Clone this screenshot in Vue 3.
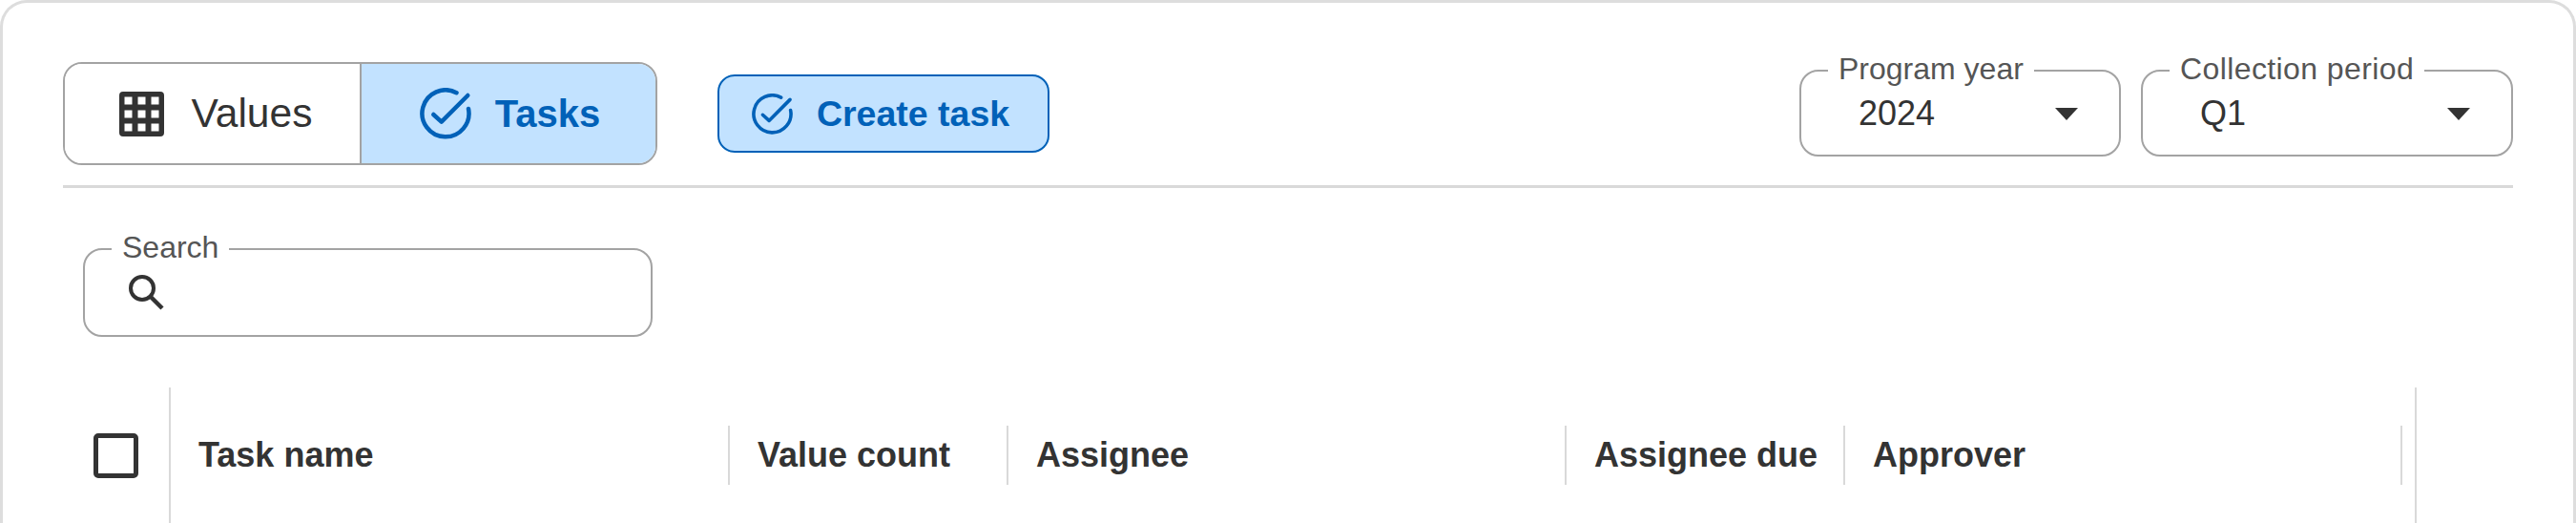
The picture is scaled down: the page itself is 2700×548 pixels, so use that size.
<script setup>
const columns = [
  { label: 'Task name', width: 586 },
  { label: 'Value count', width: 292 },
  { label: 'Assignee', width: 585 },
  { label: 'Assignee due', width: 292 },
  { label: 'Approver', width: 584 }
]
</script>

<template>
  <div class="card">
    <div class="toolbar">
      <div class="toggle">
        <button class="toggle-btn">
          <svg class="grid-icon" viewBox="0 0 47 47">
            <path fill="#333" fill-rule="evenodd" d="M4 0h39a4 4 0 0 1 4 4v39a4 4 0 0 1-4 4H4a4 4 0 0 1-4-4V4a4 4 0 0 1 4-4zM5.500 5.500v8h8v-8zm14 0v8h8v-8zm14 0v8h8v-8zM5.500 19.500v8h8v-8zm14 0v8h8v-8zm14 0v8h8v-8zM5.500 33.500v8h8v-8zm14 0v8h8v-8zm14 0v8h8v-8z" />
          </svg>
          <span>Values</span>
        </button>
        <button class="toggle-btn active">
          <svg class="check-icon" viewBox="0 0 54 54">
            <path fill="none" stroke="#0061b8" stroke-width="4.500" stroke-linecap="round" d="M38.500 5.200A24.500 24.500 0 1 0 51 22" />
            <path fill="none" stroke="#0061b8" stroke-width="4.500" stroke-linecap="round" stroke-linejoin="round" d="M14.300 28l8.400 7.700L50.300 8" />
          </svg>
          <span>Tasks</span>
        </button>
      </div>
      <button class="create-btn">
        <svg class="create-icon" viewBox="0 0 54 54">
          <path fill="none" stroke="#0061b8" stroke-width="4.500" stroke-linecap="round" d="M38.500 5.200A24.500 24.500 0 1 0 51 22" />
          <path fill="none" stroke="#0061b8" stroke-width="4.500" stroke-linecap="round" stroke-linejoin="round" d="M14.300 28l8.400 7.700L50.300 8" />
        </svg>
        <span>Create task</span>
      </button>
      <div class="spacer"></div>
      <div class="field year">
        <label class="field-label">Program year</label>
        <span class="field-value">2024</span>
        <span class="caret"></span>
      </div>
      <div class="field period">
        <label class="field-label">Collection period</label>
        <span class="field-value">Q1</span>
        <span class="caret"></span>
      </div>
    </div>
    <div class="rule"></div>
    <div class="field search">
      <label class="field-label">Search</label>
      <svg class="search-icon" viewBox="0 0 38 38">
        <circle cx="15" cy="15" r="12" fill="none" stroke="#333" stroke-width="4" />
        <path d="M24 24l12 12" stroke="#333" stroke-width="4.500" fill="none" />
      </svg>
    </div>
    <div class="table-head">
      <div class="check-cell"><span class="checkbox"></span></div>
      <div v-for="col in columns" :key="col.label" class="th" :style="{ width: col.width + 'px' }">{{ col.label }}</div>
      <div class="last-cell"></div>
    </div>
  </div>
</template>

<style>
html, body {
  margin: 0;
  background: #fff;
}
</style>

<style scoped>
.card {
  box-sizing: border-box;
  width: 2700px;
  height: 548px;
  border: 3px solid #ddd;
  border-bottom: 0;
  border-radius: 28px 28px 0 0;
  padding: 62px 63px 0;
  font-family: "Liberation Sans", Arial, sans-serif;
  color: #333;
  background: #fff;
}

.toolbar {
  display: flex;
  align-items: flex-start;
  height: 129px;
}

.toggle {
  display: flex;
  box-sizing: border-box;
  width: 623px;
  height: 108px;
  border: 2px solid #a3a3a3;
  border-radius: 20px;
  overflow: hidden;
}

.toggle-btn {
  flex: 0 0 309px;
  display: flex;
  align-items: center;
  justify-content: center;
  gap: 29px;
  border: 0;
  padding: 0 0 0 7px;
  background: #fff;
  color: #333;
  font: 42.500px "Liberation Sans", Arial, sans-serif;
}

.toggle-btn.active {
  flex-basis: 310px;
  gap: 25px;
  padding-left: 3px;
  border-left: 2px solid #a3a3a3;
  background: #c2e2ff;
  color: #0061b8;
  font-weight: 700;
  font-size: 40px;
}

.grid-icon {
  width: 47px;
  height: 47px;
}

.check-icon {
  width: 54px;
  height: 54px;
}

.create-btn {
  display: flex;
  align-items: center;
  justify-content: center;
  gap: 25px;
  box-sizing: border-box;
  width: 348px;
  height: 82px;
  margin: 13px 0 0 63px;
  padding: 0 6px 0 0;
  border: 2px solid #0061b8;
  border-radius: 18px;
  background: #c2e2ff;
  color: #0061b8;
  font: 700 37.500px "Liberation Sans", Arial, sans-serif;
}

.create-icon {
  width: 43px;
  height: 43px;
}

.spacer {
  flex: 1;
}

.field {
  position: relative;
  box-sizing: border-box;
  height: 91px;
  border: 2px solid #a3a3a3;
  border-radius: 20px;
}

.year {
  width: 337px;
  margin: 8px 21px 0 0;
}

.period {
  width: 390px;
  margin-top: 8px;
}

.period .field-label {
  letter-spacing: 0.4px;
}

.field-label {
  position: absolute;
  top: -21px;
  left: 28px;
  padding: 0 11px;
  background: #fff;
  color: #555;
  font-size: 32px;
  line-height: 36px;
  white-space: nowrap;
}

.field-value {
  position: absolute;
  left: 60px;
  top: 22px;
  font-size: 36px;
  line-height: 44px;
}

.caret {
  position: absolute;
  right: 43px;
  top: 38px;
  width: 0;
  height: 0;
  border-left: 12px solid transparent;
  border-right: 12px solid transparent;
  border-top: 13px solid #333;
}

.rule {
  height: 3px;
  background: #d9d9d9;
}

.search {
  width: 597px;
  height: 93px;
  margin: 63px 0 0 21px;
}

.search-icon {
  position: absolute;
  left: 45px;
  top: 25px;
  width: 38px;
  height: 38px;
}

.table-head {
  display: flex;
  align-items: center;
  height: 142px;
  margin-top: 53px;
}

.check-cell {
  display: flex;
  align-items: center;
  justify-content: center;
  box-sizing: border-box;
  width: 113px;
  height: 100%;
  border-right: 2px solid #d9d9d9;
}

.checkbox {
  box-sizing: border-box;
  width: 47px;
  height: 47px;
  border: 5px solid #333;
  border-radius: 5px;
}

.th {
  box-sizing: border-box;
  height: 62px;
  padding-left: 29px;
  border-right: 2px solid #d9d9d9;
  font-size: 36px;
  font-weight: 700;
  line-height: 62px;
  white-space: nowrap;
}

.last-cell {
  width: 13px;
  height: 100%;
  border-right: 2px solid #d9d9d9;
}
</style>
